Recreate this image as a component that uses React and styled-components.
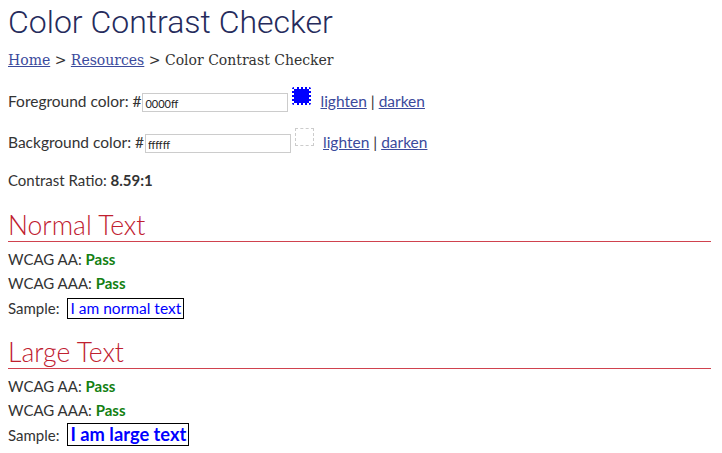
import React from 'react'
import styled, { createGlobalStyle } from 'styled-components'

const GlobalStyle = createGlobalStyle`
  body {
    margin: 0;
    background: #fff;
    font-family: Lato, "Open Sans", sans-serif;
    color: #333;
  }
`

const Page = styled.div`
  padding: 0 11px 0 8px;
`

const Title = styled.h1`
  margin: 0;
  padding-top: 2px;
  font-family: Roboto, sans-serif;
  font-weight: 300;
  font-size: 32px;
  line-height: 40px;
  color: #252b5c;
`

const Crumbs = styled.div`
  margin-top: 8px;
  font-family: "DejaVu Serif", serif;
  font-size: 14px;
  line-height: 20px;
  color: #333;
`

const Link = styled.a`
  color: #3b4a9c;
  text-decoration: underline;
`

const ColorRow = styled.div`
  display: flex;
  align-items: center;
  height: 41px;
  font-size: 15.5px;
  margin-top: ${(p) => p.$top || 0}px;
`

const HexInput = styled.input`
  box-sizing: border-box;
  width: 146px;
  height: 19px;
  margin: 3px 0 0 1px;
  padding: 2px 2px 0;
  border: 1px solid #ccc;
  font-family: Lato, sans-serif;
  font-size: 11px;
  color: #222;
`

const Swatch = styled.span`
  box-sizing: border-box;
  width: 19px;
  height: 18px;
  margin: -10px 9px 0 4px;
  border: ${(p) => (p.$light ? '1px dashed #ccc' : `2px dotted ${p.$color}`)};
  border-radius: ${(p) => (p.$light ? 0 : 2)}px;
  background: ${(p) => p.$color};
  background-clip: padding-box;
`

const Ratio = styled.div`
  margin-top: 8px;
  font-size: 15px;
  line-height: 20px;
`

const Section = styled.h2`
  margin: ${(p) => (p.$first ? 19 : 15)}px 0 5px;
  padding: 0;
  border-bottom: 1px solid #d0424e;
  font-family: Lato, sans-serif;
  font-weight: 300;
  font-size: 26.5px;
  line-height: 32px;
  color: #c0202f;
`

const Line = styled.div`
  font-size: 15px;
  line-height: ${(p) => (p.$tall ? 25 : 24)}px;
`

const Pass = styled.b`
  color: #128012;
`

const Sample = styled.span`
  display: inline-block;
  margin-left: 8px;
  border: 1px solid #000;
  padding: ${(p) => (p.$large ? '1px 2px' : '0 2px')};
  color: #0000ff;
  font-size: ${(p) => (p.$large ? 18.3 : 15.5)}px;
  font-weight: ${(p) => (p.$large ? 700 : 400)};
  line-height: 19px;
`

const ColorField = ({ label, value, top, light }) => (
  <ColorRow $top={top}>
    {label} color: #
    <HexInput defaultValue={value.slice(1)} />
    <Swatch $color={value} $light={light} />
    <Link href="#">lighten</Link>&nbsp;|&nbsp;<Link href="#">darken</Link>
  </ColorRow>
)

const Result = ({ title, large, first }) => (
  <>
    <Section $first={first}>{title}</Section>
    <Line>WCAG AA: <Pass>Pass</Pass></Line>
    <Line $tall>WCAG AAA: <Pass>Pass</Pass></Line>
    <Line $tall>
      Sample:<Sample $large={large}>I am {large ? 'large' : 'normal'} text</Sample>
    </Line>
  </>
)

export default function App() {
  return (
    <Page>
      <GlobalStyle />
      <Title>Color Contrast Checker</Title>
      <Crumbs>
        <Link href="#">Home</Link> &gt; <Link href="#">Resources</Link> &gt; Color Contrast Checker
      </Crumbs>
      <ColorField label="Foreground" value="#0000ff" top={10} />
      <ColorField label="Background" value="#ffffff" light />
      <Ratio>
        Contrast Ratio: <b>8.59:1</b>
      </Ratio>
      <Result title="Normal Text" first />
      <Result title="Large Text" large />
    </Page>
  )
}
